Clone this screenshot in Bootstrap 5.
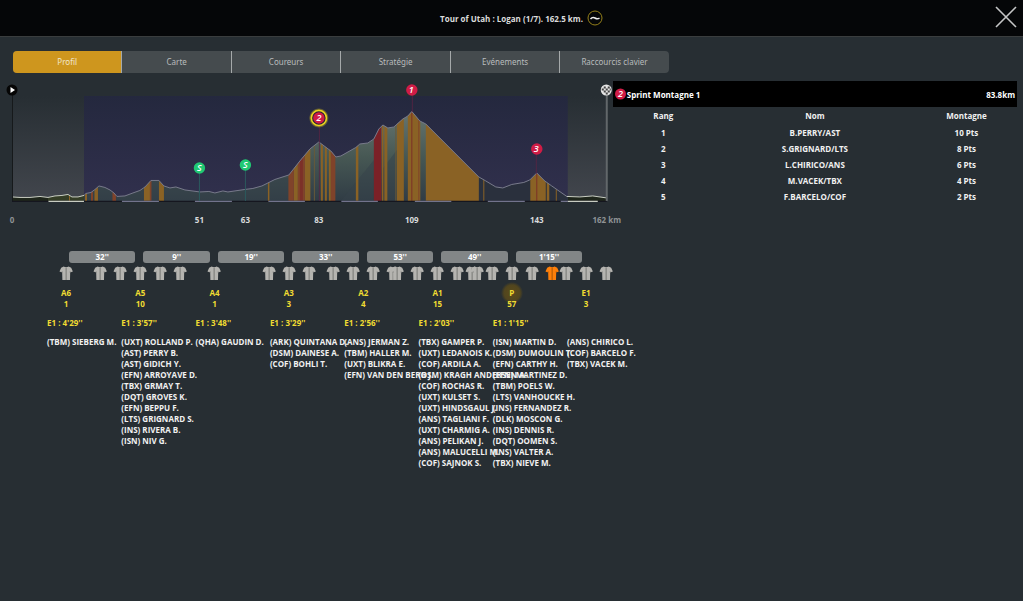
<!DOCTYPE html>
<html lang="fr">
<head>
<meta charset="utf-8">
<meta name="viewport" content="width=device-width, initial-scale=1">
<title>Tour of Utah : Logan</title>
<link href="https://cdn.jsdelivr.net/npm/bootstrap@5.3.0/dist/css/bootstrap.min.css" rel="stylesheet">
<style>
body{background:#272e33;color:#f1f1f1;font:700 8px/11px "Open Sans","Noto Sans",sans-serif;min-height:100vh}
.topbar{height:37px;background:#050608;border-bottom:1px solid #3a3d3e}
.topbar h1{font-size:8px;line-height:11px;color:#dcdcdc;margin-left:20px}
.close-x{right:5px;top:5px;width:24px;height:24px}
.stage-tabs{width:64.1%;margin:14px 0 0 13px;height:22px;border-radius:4px;overflow:hidden;background:#454b4e}
.stage-tabs .nav-item{flex:1 1 0}
.stage-tabs .nav-link{padding:0;font:400 8px/22px "Noto Sans","Open Sans",sans-serif;color:#b9bcbd;background:none;border:0;border-radius:0}
.stage-tabs .nav-item+.nav-item{border-left:1px solid #a5a9aa}
.stage-tabs .nav-link.active{background:#ce961e;color:#f2e7cc}
.profile-col{flex:0 0 59.9%}
.profile-col svg,.jerseys{display:block;width:100%;height:auto;overflow:visible}
.sprint-panel{flex:1 1 0;min-width:0;margin-right:6px}
.sprint-head{height:26px;background:#000;color:#fff;padding:0 2px 0 1px}
.results{text-align:center;table-layout:fixed}
.results th,.results td{padding:0;height:16px}
.results thead th{height:17px}
.results th:nth-child(2){width:50%}
.groups{width:58.1%;margin:20px 0 0 47px}
.gap-row{padding-left:22px;width:91.4%}
.gap-pill{background:#828687;color:#fff;border-radius:3px;height:12px;line-height:12px;text-align:center;flex:1 1 0;margin-right:8px}
.group-list{padding-top:2px}
.group-col{flex:1 1 0;min-width:0;white-space:nowrap}
.group-tag{width:38px;text-align:center;color:#f0dc32}
.group-tag.halo{margin:-6px 0;padding:6px 0;background:radial-gradient(circle at 50% 12px,#5c4c1b 0,#51451e 8px,transparent 11px)}
.group-time{color:#f0dc32;height:11px}
</style>
</head>
<body>
<header class="topbar position-relative d-flex align-items-center justify-content-center">
<h1 class="fw-bold my-0 me-0">Tour of Utah : Logan (1/7). 162.5 km.</h1>
<svg width="20" height="16" viewBox="-4 0 20 16" aria-hidden="true"><circle cx="8" cy="8" r="7" fill="none" stroke="#95801a"/><path d="M3.500 9Q5.500 6.500 8 8T12.500 8" fill="none" stroke="#eee" stroke-width="1.500"/></svg>
<button class="close-x btn p-0 border-0 position-absolute d-flex" type="button" aria-label="Fermer"><svg width="24" height="24" viewBox="0 0 24 24"><path d="M2 2 22 22M22 2 2 22" stroke="#c5c6c7" stroke-width="1.600"/></svg></button>
</header>
<nav>
<ul class="stage-tabs nav flex-nowrap p-0">
<li class="nav-item"><button class="nav-link active w-100" type="button">Profil</button></li>
<li class="nav-item"><button class="nav-link w-100" type="button">Carte</button></li>
<li class="nav-item"><button class="nav-link w-100" type="button">Coureurs</button></li>
<li class="nav-item"><button class="nav-link w-100" type="button">Stratégie</button></li>
<li class="nav-item"><button class="nav-link w-100" type="button">Evénements</button></li>
<li class="nav-item"><button class="nav-link w-100" type="button">Raccourcis clavier</button></li>
</ul>
</nav>
<main>
<div class="d-flex pt-2">
<section class="profile-col" aria-label="Profil">
<svg viewBox="0 81 613 150" font-size="8" font-weight="700" text-anchor="middle">
<defs>
<linearGradient id="sky" x1="0" y1="0" x2="0" y2="1"><stop offset="0" stop-color="#272e33"/><stop offset="1" stop-color="#42464d"/></linearGradient>
<linearGradient id="blue" x1="0" y1="0" x2="0" y2="1"><stop offset="0" stop-color="#24283e"/><stop offset="1" stop-color="#31304d"/></linearGradient>
<linearGradient id="land" gradientUnits="userSpaceOnUse" x1="0" y1="112" x2="0" y2="201"><stop offset="0" stop-color="#66756f"/><stop offset=".5" stop-color="#475854"/><stop offset="1" stop-color="#303c45"/></linearGradient>
<clipPath id="hill"><path d="M12 201V197L20 197.500 30 197.500 40 196.500 48 197.500 55 196 62 195.500 68 194.500 72 197 78 197 84 195.500 86 193.500 91 192.500 95 189.500 99 186 105 187.500 110 190 114 193 117 196.500 125 196 133 193 140 190.500 145 187 151 180.500 159 180.500 164 186 170 188 176 187 185 190 200 192 209 191.500 215 193 223 191 228 192 245 189.500 253 188.500 262 186 268 183 275 179.500 289 175 300 161 310 149 319 142 331 151 336 157 341 156 356 147.500 360 144 368 143 374 139 379 129 383 125 388 128 394 127 403 119 408 116 412 111.500 420 121 426 124 479 177 486 181 496 187 503 188 512 184.500 524 182.500 530 180 537 173 545 181 552 186 567 196.500 580 197 593 196 607 198V201Z"/></clipPath>
<radialGradient id="glow"><stop offset=".7" stop-color="#d8c01c"/><stop offset="1" stop-color="#d8c01c" stop-opacity="0"/></radialGradient>
</defs>
<path fill="url(#sky)" d="M12 96h595v105H12z"/>
<path fill="url(#blue)" d="M84 96h484v105H84z"/>
<g clip-path="url(#hill)">
<path fill="url(#land)" d="M84 100h484v101H84z"/>
<path fill="#1f261b" d="M12 190h36v11H12zM568 190h39v11h-39z"/><path fill="#343d26" d="M48 190h36v11H48z"/>
<path fill="#2a303d" d="M479 170h89v31h-89z"/>
<path fill="#35424a" opacity=".5" d="M84 178H290V201H84zM341 201 374 160V201zM382 170 397 150V201H382z"/>
<path fill="#8a6225" d="M69 190h1v11h-1zM85 180h2v21h-2zM94.500 180h3.500v21h-3.500zM144 180h6v21h-6zM159 180h5v21h-5zM268 180h1.500v21h-1.500zM294 140h4v61h-4zM305 140h5.500v61H305zM321 140h2v61h-2zM325 140h2v61h-2zM329 140h2v61h-2zM356 140h2.500v61H356zM382 120h1.500v81H382zM384.500 120h3v81h-3zM397 110h7v91h-7zM408 110h12.500v91H408zM426 120h53v81h-53zM483.500 170h1v31h-1zM530.500 170H546v31h-15.500zM547 170h2.500v31H547zM556 170h1v31h-1z"/>
<path fill="#67593a" d="M314 140h1v61h-1zM395.500 120h1v81h-1z"/>
<path fill="#80432a" d="M91 180h2v21h-2zM112.500 180h3.500v21h-3.500zM150 180h1.500v21H150zM288.500 140h5.500v61h-5.500zM298 140h7v61h-7zM331 140h4.500v61H331zM418.500 110h1v91h-1z"/>
<path fill="#7c3028" d="M300 140h3v61h-3zM411.500 110h1v91h-1zM536.500 170h1v31h-1z"/>
<path fill="#7b2127" d="M374 120h7.500v81H374z"/>
</g>
<path fill="none" stroke="#77798b" d="M84 195.500 86 193.500 91 192.500 95 189.500 99 186 105 187.500 110 190 114 193 117 196.500 125 196 133 193 140 190.500 145 187 151 180.500 159 180.500 164 186 170 188 176 187 185 190 200 192 209 191.500 215 193 223 191 228 192 245 189.500 253 188.500 262 186 268 183 275 179.500 289 175 300 161 310 149 319 142 331 151 336 157 341 156 356 147.500 360 144 368 143 374 139 379 129 383 125 388 128 394 127 403 119 408 116 412 111.500 420 121 426 124 479 177 486 181 496 187 503 188 512 184.500 524 182.500 530 180 537 173 545 181 552 186 567 196.500"/>
<path fill="none" stroke="#c9cec2" d="M12 197 20 197.500 30 197.500 40 196.500 48 197.500 55 196 62 195.500 68 194.500 72 197 78 197 84 195.500M567 196.500 580 197 593 196 607 198"/>
<path stroke="#15161f" stroke-width="1.300" d="M12 201.400H607"/>
<path stroke="#72738c" stroke-width="1.300" d="M122 201.400h37M195 201.400h37M268.500 201.400H305M341.500 201.400H378M415 201.400h36.500M488 201.400h37M561 201.400h7"/>
<path stroke="#c8ccc2" stroke-width="1.300" d="M48.500 201.400H84M568 201.400h30"/>
<path stroke="#16191b" d="M12.500 95V201"/><path stroke="#62676a" stroke-width="2" d="M607 95V201"/>
<path stroke="#2b5a5d" d="M199.500 173V201M245.500 170V201"/><path stroke="#5b2443" d="M319.500 126V201M412.500 95V112M536.500 154V174" opacity=".8"/>
<circle cx="12" cy="90" r="5.500" fill="#050505"/><path fill="#fff" d="M10.500 87 15 90 10.500 93z"/>
<circle cx="606.500" cy="90" r="5.500" fill="#e6e6e6"/><path fill="#444" d="M604 86.500h2v2h-2zM608 86.500h2v2h-2zM602 88.500h2v2h-2zM606 88.500h2v2h-2zM610 88.500h1v2h-1zM604 90.500h2v2h-2zM608 90.500h2v2h-2zM606 92.500h2v2h-2z"/>
<g fill="#20c873"><circle cx="199.500" cy="168" r="5.700"/><circle cx="245.500" cy="165" r="5.700"/></g>
<circle cx="319" cy="118" r="10" fill="url(#glow)"/><circle cx="319" cy="118" r="7.500" fill="#272038" stroke="#ecd51d" stroke-width="1.500"/>
<g fill="#d01c46"><circle cx="319" cy="118" r="5.700"/><circle cx="412" cy="90" r="5.700"/><circle cx="537" cy="149" r="5.700"/></g>
<g fill="#fff" font-style="italic" font-size="9" font-weight="600"><text x="199.500" y="171">S</text><text x="245.500" y="168">S</text><text x="319" y="121">2</text><text x="411.500" y="93">1</text><text x="536.500" y="152">3</text></g>
<g fill="#d9dbdc"><text x="199.500" y="223">51</text><text x="245.500" y="223">63</text><text x="319" y="223">83</text><text x="412" y="223">109</text><text x="537" y="223">143</text></g>
<g fill="#8f9395"><text x="12" y="223">0</text><text x="607" y="223">162 km</text></g>
</svg>
</section>
<section class="sprint-panel">
<div class="sprint-head d-flex align-items-center">
<svg width="13" height="12" viewBox="0 0 13 12"><circle cx="6.500" cy="6" r="5.500" fill="#d01c46"/><text x="6.500" y="9" fill="#fff" font-size="9" font-weight="600" font-style="italic" text-anchor="middle">2</text></svg>
<span>Sprint Montagne 1</span><span class="ms-auto">83.8km</span></div>
<table class="results w-100">
<thead><tr><th scope="col">Rang</th><th scope="col">Nom</th><th scope="col">Montagne</th></tr></thead>
<tbody>
<tr><td>1</td><td>B.PERRY/AST</td><td>10 Pts</td></tr>
<tr><td>2</td><td>S.GRIGNARD/LTS</td><td>8 Pts</td></tr>
<tr><td>3</td><td>L.CHIRICO/ANS</td><td>6 Pts</td></tr>
<tr><td>4</td><td>M.VACEK/TBX</td><td>4 Pts</td></tr>
<tr><td>5</td><td>F.BARCELO/COF</td><td>2 Pts</td></tr>
</tbody>
</table>
</section>
</div>
<section class="groups" aria-label="Groupes">
<div class="gap-row d-flex"><div class="gap-pill">32''</div><div class="gap-pill">9''</div><div class="gap-pill">19''</div><div class="gap-pill">33''</div><div class="gap-pill">53''</div><div class="gap-pill">49''</div><div class="gap-pill">1'15''</div></div>
<svg class="jerseys" viewBox="47 263 594 22" aria-hidden="true">
<defs><g id="j"><path d="M-2.500-6.500Q0-5.500 2.500-6.500L5-5.200 6.700-1.500 4-.5 3.800 7H-3.800L-4-.5-6.700-1.500-5-5.200Z"/><path d="M0-5.800V7" stroke="#000" stroke-opacity=".22" stroke-width="1.600" fill="none"/><path d="M-4-2V0M4-2V0" stroke="#000" stroke-opacity=".2" stroke-width=".8"/></g></defs>
<g fill="#b5b4b0">
<use href="#j" x="66" y="273"/><use href="#j" x="100" y="273"/><use href="#j" x="120" y="273"/><use href="#j" x="140" y="273"/><use href="#j" x="160" y="273"/><use href="#j" x="180" y="273"/><use href="#j" x="214" y="273"/><use href="#j" x="269" y="273"/><use href="#j" x="289" y="273"/><use href="#j" x="309" y="273"/><use href="#j" x="333" y="273"/><use href="#j" x="353" y="273"/><use href="#j" x="373" y="273"/><use href="#j" x="393" y="273"/><use href="#j" x="397" y="273"/><use href="#j" x="417" y="273"/><use href="#j" x="437" y="273"/><use href="#j" x="457" y="273"/><use href="#j" x="472" y="273"/><use href="#j" x="477" y="273"/><use href="#j" x="492" y="273"/><use href="#j" x="512" y="273"/><use href="#j" x="532" y="273"/><use href="#j" x="566" y="273"/><use href="#j" x="586" y="273"/><use href="#j" x="606" y="273"/></g>
<use href="#j" x="552" y="273" fill="#ff800a"/>
</svg>
<div class="group-list d-flex">
<div class="group-col"><div class="group-tag">A6<br>1</div><div class="group-time my-2">E1 : 4'29''</div>(TBM) SIEBERG M.</div>
<div class="group-col"><div class="group-tag">A5<br>10</div><div class="group-time my-2">E1 : 3'57''</div>(UXT) ROLLAND P.<br>(AST) PERRY B.<br>(AST) GIDICH Y.<br>(EFN) ARROYAVE D.<br>(TBX) GRMAY T.<br>(DQT) GROVES K.<br>(EFN) BEPPU F.<br>(LTS) GRIGNARD S.<br>(INS) RIVERA B.<br>(ISN) NIV G.</div>
<div class="group-col"><div class="group-tag">A4<br>1</div><div class="group-time my-2">E1 : 3'48''</div>(QHA) GAUDIN D.</div>
<div class="group-col"><div class="group-tag">A3<br>3</div><div class="group-time my-2">E1 : 3'29''</div>(ARK) QUINTANA D.<br>(DSM) DAINESE A.<br>(COF) BOHLI T.</div>
<div class="group-col"><div class="group-tag">A2<br>4</div><div class="group-time my-2">E1 : 2'56''</div>(ANS) JERMAN Z.<br>(TBM) HALLER M.<br>(UXT) BLIKRA E.<br>(EFN) VAN DEN BERG J.</div>
<div class="group-col"><div class="group-tag">A1<br>15</div><div class="group-time my-2">E1 : 2'03''</div>(TBX) GAMPER P.<br>(UXT) LEDANOIS K.<br>(COF) ARDILA A.<br>(DSM) KRAGH ANDERSEN A.<br>(COF) ROCHAS R.<br>(UXT) KULSET S.<br>(UXT) HINDSGAUL J.<br>(ANS) TAGLIANI F.<br>(UXT) CHARMIG A.<br>(ANS) PELIKAN J.<br>(ANS) MALUCELLI M.<br>(COF) SAJNOK S.</div>
<div class="group-col"><div class="group-tag halo">P<br>57</div><div class="group-time my-2">E1 : 1'15''</div>(ISN) MARTIN D.<br>(DSM) DUMOULIN T.<br>(EFN) CARTHY H.<br>(EFN) MARTINEZ D.<br>(TBM) POELS W.<br>(LTS) VANHOUCKE H.<br>(INS) FERNANDEZ R.<br>(DLK) MOSCON G.<br>(INS) DENNIS R.<br>(DQT) OOMEN S.<br>(INS) VALTER A.<br>(TBX) NIEVE M.</div>
<div class="group-col"><div class="group-tag">E1<br>3</div><div class="group-time my-2">&nbsp;</div>(ANS) CHIRICO L.<br>(COF) BARCELO F.<br>(TBX) VACEK M.</div>
</div>
</section>
</main>
<script src="https://cdn.jsdelivr.net/npm/bootstrap@5.3.0/dist/js/bootstrap.bundle.min.js"></script>
</body>
</html>
